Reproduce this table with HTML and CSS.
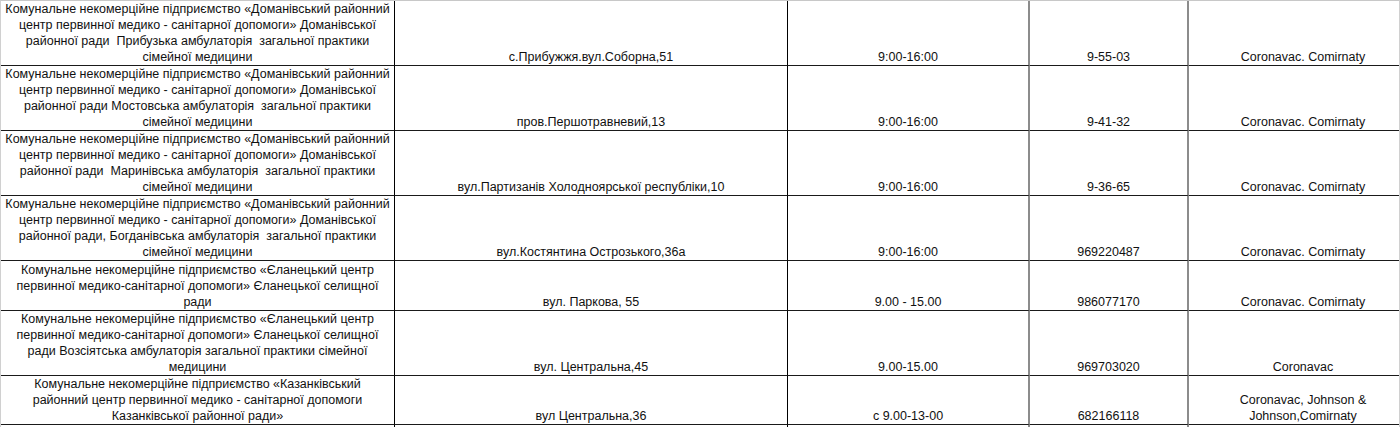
FILE: index.html
```html
<!DOCTYPE html>
<html lang="uk">
<head>
<meta charset="utf-8">
<title>Пункти вакцинації</title>
<link rel="stylesheet" href="styles.css">
</head>
<body>
<div class="frame">
<div class="sheet">
  <div class="cell c1"><span class="ln">Комунальне некомерційне підприємство «Доманівський районний</span><span class="ln">центр первинної медико - санітарної допомоги» Доманівської</span><span class="ln">районної ради  Прибузька амбулаторія  загальної практики</span><span class="ln">сімейної медицини</span></div>
  <div class="cell c2">с.Прибужжя.вул.Соборна,51</div>
  <div class="cell c3">9:00-16:00</div>
  <div class="cell c4">9-55-03</div>
  <div class="cell c5">Coronavac. Comirnaty</div>

  <div class="cell c1"><span class="ln">Комунальне некомерційне підприємство «Доманівський районний</span><span class="ln">центр первинної медико - санітарної допомоги» Доманівської</span><span class="ln">районної ради Мостовська амбулаторія  загальної практики</span><span class="ln">сімейної медицини</span></div>
  <div class="cell c2">пров.Першотравневий,13</div>
  <div class="cell c3">9:00-16:00</div>
  <div class="cell c4">9-41-32</div>
  <div class="cell c5">Coronavac. Comirnaty</div>

  <div class="cell c1"><span class="ln">Комунальне некомерційне підприємство «Доманівський районний</span><span class="ln">центр первинної медико - санітарної допомоги» Доманівської</span><span class="ln">районної ради  Маринівська амбулаторія  загальної практики</span><span class="ln">сімейної медицини</span></div>
  <div class="cell c2">вул.Партизанів Холодноярської республіки,10</div>
  <div class="cell c3">9:00-16:00</div>
  <div class="cell c4">9-36-65</div>
  <div class="cell c5">Coronavac. Comirnaty</div>

  <div class="cell c1"><span class="ln">Комунальне некомерційне підприємство «Доманівський районний</span><span class="ln">центр первинної медико - санітарної допомоги» Доманівської</span><span class="ln">районної ради, Богданівська амбулаторія  загальної практики</span><span class="ln">сімейної медицини</span></div>
  <div class="cell c2">вул.Костянтина Острозького,36а</div>
  <div class="cell c3">9:00-16:00</div>
  <div class="cell c4">969220487</div>
  <div class="cell c5">Coronavac. Comirnaty</div>

  <div class="cell c1"><span class="ln">Комунальне некомерційне підприємство «Єланецький центр</span><span class="ln">первинної медико-санітарної допомоги» Єланецької селищної</span><span class="ln">ради</span></div>
  <div class="cell c2">вул. Паркова, 55</div>
  <div class="cell c3">9.00 - 15.00</div>
  <div class="cell c4">986077170</div>
  <div class="cell c5">Coronavac. Comirnaty</div>

  <div class="cell c1"><span class="ln">Комунальне некомерційне підприємство «Єланецький центр</span><span class="ln">первинної медико-санітарної допомоги» Єланецької селищної</span><span class="ln">ради Возсіятська амбулаторія загальної практики сімейної</span><span class="ln">медицини</span></div>
  <div class="cell c2">вул. Центральна,45</div>
  <div class="cell c3">9.00-15.00</div>
  <div class="cell c4">969703020</div>
  <div class="cell c5">Coronavac</div>

  <div class="cell c1"><span class="ln">Комунальне некомерційне підприємство «Казанківський</span><span class="ln">районний центр первинної медико - санітарної допомоги</span><span class="ln">Казанківської районної ради»</span></div>
  <div class="cell c2">вул Центральна,36</div>
  <div class="cell c3">с 9.00-13-00</div>
  <div class="cell c4">682166118</div>
  <div class="cell c5"><span class="ln">Coronavac, Johnson &amp;</span><span class="ln">Johnson,Comirnaty</span></div>

  <div class="cell c1"></div>
  <div class="cell c2"></div>
  <div class="cell c3"></div>
  <div class="cell c4"></div>
  <div class="cell c5"></div>
</div>
</div>
</body>
</html>
```

FILE: styles.css
```css
html, body {
  margin: 0;
  padding: 0;
  background: #ffffff;
}

.frame {
  width: 1400px;
  height: 427px;
  box-sizing: border-box;
  border-left: 1px solid #d0d0d0;
  border-right: 1px solid #d0d0d0;
  border-top: 1px solid #c8c8c8;
  overflow: hidden;
}

.sheet {
  display: grid;
  grid-template-columns: 394px 393px 242px 159px 228px;
  grid-template-rows: 65px 65px 65px 65px 50px 65px 49px 30px;
  width: 1416px;
  font-family: "Liberation Sans", Arial, sans-serif;
  font-size: 12.5px;
  line-height: 16px;
  color: #111111;
}

.cell {
  box-sizing: border-box;
  display: flex;
  flex-direction: column;
  justify-content: flex-end;
  align-items: center;
  text-align: center;
  white-space: nowrap;
  border-bottom: 1px solid #1a1a1a;
  overflow: hidden;
}

.c1, .c2 {
  border-right: 1px solid #000000;
}

.c3, .c4 {
  border-right: 2px solid #8c8c8c;
}

.ln {
  display: block;
  white-space: pre;
}
```
